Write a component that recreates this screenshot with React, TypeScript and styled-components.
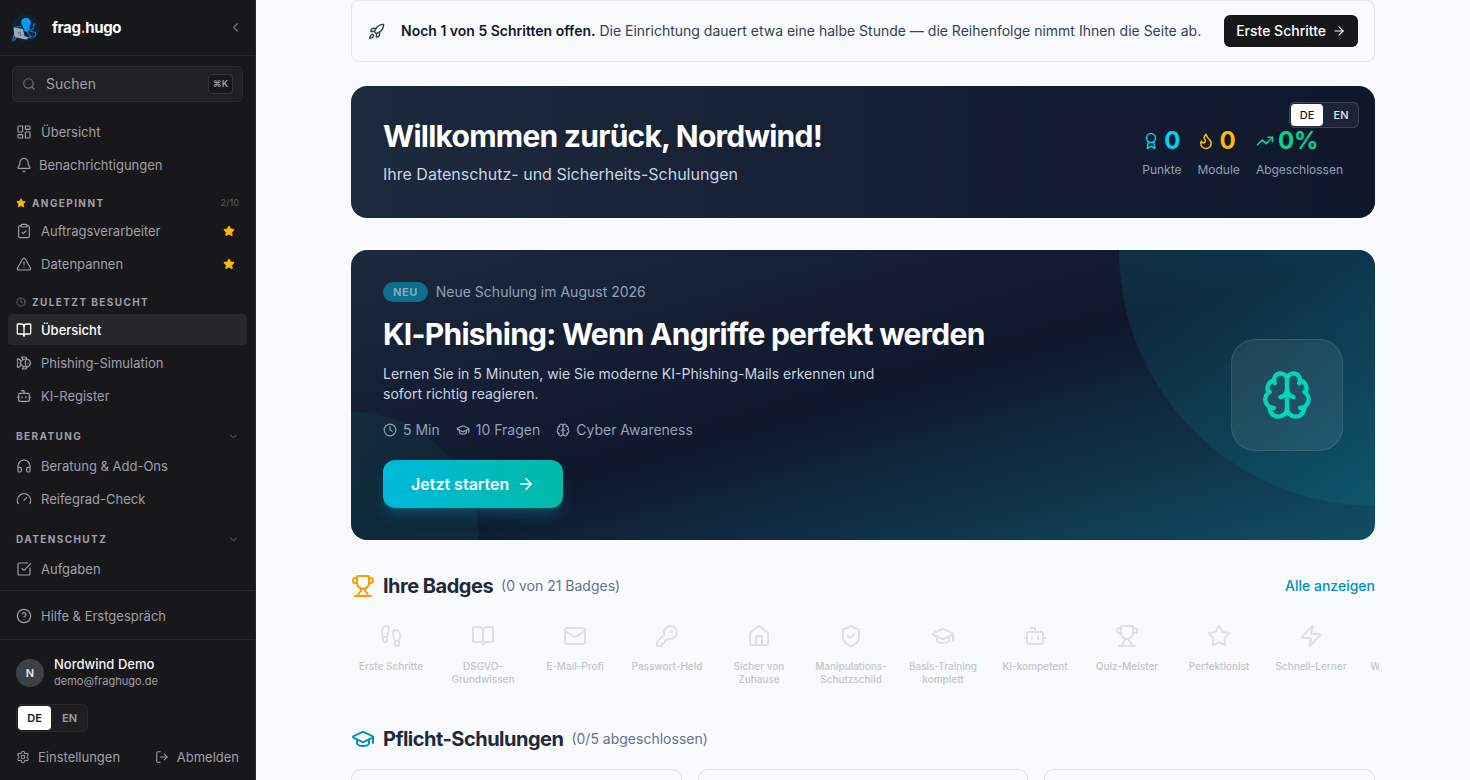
import React from "react";
import styled, { createGlobalStyle, css } from "styled-components";
import {
  ArrowRight,
  Award,
  Bell,
  BookOpen,
  Bot,
  Brain,
  ChevronDown,
  ChevronLeft,
  CircleHelp,
  ClipboardCheck,
  Clock,
  Fish,
  Flame,
  Footprints,
  GraduationCap,
  Headphones,
  House,
  KeyRound,
  LayoutDashboard,
  LogOut,
  LucideIcon,
  Mail,
  Rocket,
  Search,
  Settings,
  ShieldCheck,
  SquareCheckBig,
  Star,
  TrendingUp,
  TriangleAlert,
  Trophy,
  Zap,
} from "lucide-react";

const GlobalStyle = createGlobalStyle`
  *, *::before, *::after { box-sizing: border-box; }
  body {
    margin: 0;
    background: #f8fafc;
    color: #1e293b;
    font-family: Inter, "Liberation Sans", sans-serif;
    font-size: 14px;
    line-height: 20px;
    -webkit-font-smoothing: antialiased;
  }
  button, input { font: inherit; color: inherit; }
  button { cursor: pointer; border: 0; background: none; padding: 0; }
  a { color: inherit; text-decoration: none; }
  h1, h2, p, ul { margin: 0; padding: 0; }
  ul { list-style: none; }
  svg { flex: none; display: block; }
`;

const Shell = styled.div`
  display: flex;
  height: 100vh;
  overflow: hidden;
`;

/* ---------- Sidebar ---------- */

const Sidebar = styled.aside`
  flex: none;
  display: flex;
  flex-direction: column;
  width: 256px;
  background: #18181b;
  border-right: 1px solid #27272a;
  color: #9f9fa9;
`;

const SidebarHeader = styled.header`
  display: flex;
  align-items: center;
  gap: 12px;
  height: 56px;
  flex: none;
  padding: 0 12px;
  border-bottom: 1px solid #27272a;
`;

const Brand = styled.a`
  flex: 1;
  display: flex;
  align-items: center;
  gap: 12px;
  font-size: 15px;
  font-weight: 700;
  letter-spacing: -0.025em;
  color: #fff;
  span { color: #f59e0b; }
`;

const CollapseButton = styled.button`
  color: #71717b;
`;

const SearchBox = styled.label`
  flex: none;
  display: flex;
  align-items: center;
  gap: 10px;
  height: 36px;
  margin: 10px 12px 0;
  padding: 0 9px;
  border: 1px solid #2c2c30;
  border-radius: 6px;
  background: #202023;
  input {
    flex: 1;
    min-width: 0;
    padding: 0;
    border: 0;
    outline: 0;
    background: none;
    &::placeholder { color: #9f9fa9; opacity: 1; }
  }
  svg { color: #71717b; }
`;

const Kbd = styled.kbd`
  padding: 0 4px;
  border: 1px solid #34343a;
  border-radius: 4px;
  background: #18181b;
  font-family: inherit;
  font-size: 9px;
  font-weight: 600;
  line-height: 18px;
`;

const Nav = styled.nav`
  flex: 1;
  min-height: 0;
  overflow-y: auto;
  scrollbar-width: none;
  padding: 14px 8px 0;
`;

const NavList = styled.ul`
  display: flex;
  flex-direction: column;
  gap: 2px;
`;

const NavLink = styled.a<{ $active?: boolean; $gap?: number }>`
  flex: 1;
  display: flex;
  align-items: center;
  gap: ${(p) => p.$gap ?? 9}px;
  height: 31px;
  padding: 0 8px;
  border-radius: 4px;
  font-size: 13px;
  ${(p) =>
    p.$active &&
    css`
      background: #27272a;
      color: #fff;
      font-weight: 500;
    `}
`;

const NavItem = styled.li`
  display: flex;
  position: relative;
`;

const PinButton = styled.button`
  position: absolute;
  right: 12px;
  top: 10px;
  color: #ffb900;
`;

const Group = styled.section<{ $collapsible?: boolean }>`
  display: flex;
  flex-direction: column;
  gap: ${(p) => (p.$collapsible ? 2 : 0)}px;
  margin-top: ${(p) => (p.$collapsible ? 13 : 11)}px;
`;

const groupHead = css`
  display: flex;
  align-items: center;
  gap: 6px;
  height: 24px;
  padding: 0 8px;
  font-size: 10px;
  font-weight: 700;
  letter-spacing: 0.14em;
  text-transform: uppercase;
  color: #9f9fa9;
`;

const GroupTitle = styled.h2`
  ${groupHead}
`;

const GroupToggle = styled.button`
  ${groupHead}
  justify-content: space-between;
  text-align: left;
  svg { color: #71717b; }
`;

const Count = styled.span`
  margin-left: auto;
  font-size: 9px;
  font-weight: 500;
  letter-spacing: 0;
  color: #52525c;
`;

const HelpBar = styled.div`
  flex: none;
  padding: 9px 8px 8px;
  border-top: 1px solid #27272a;
`;

const Account = styled.footer`
  flex: none;
  display: flex;
  flex-direction: column;
  align-items: flex-start;
  padding: 15px 16px 13px;
  border-top: 1px solid #27272a;
`;

const UserRow = styled.div`
  display: flex;
  align-items: center;
  gap: 10px;
  margin-bottom: 14px;
`;

const Avatar = styled.span`
  display: grid;
  place-items: center;
  width: 28px;
  height: 28px;
  border-radius: 50%;
  background: #3f3f46;
  color: #e4e4e7;
  font-size: 11px;
  font-weight: 600;
`;

const UserName = styled.p`
  font-size: 13px;
  line-height: 18px;
  font-weight: 500;
  color: #f4f4f5;
`;

const UserMail = styled.p`
  font-size: 11px;
  line-height: 17px;
`;

const Languages = styled.div<{ $glass?: boolean }>`
  display: flex;
  gap: 2px;
  padding: 1px;
  border: 1px solid ${(p) => (p.$glass ? "rgba(255,255,255,.15)" : "#2a2a2e")};
  border-radius: 6px;
  background: ${(p) => (p.$glass ? "rgba(255,255,255,.06)" : "#1e1e21")};
`;

const Language = styled.button<{ $active?: boolean; $small?: boolean }>`
  height: ${(p) => (p.$small ? 22 : 24)}px;
  width: ${(p) => (p.$small ? 32 : 33)}px;
  border-radius: 4px;
  font-size: 11px;
  font-weight: ${(p) => (p.$small ? 500 : 600)};
  ${(p) =>
    p.$active &&
    css`
      background: #fff;
      color: #18181b;
    `}
`;

const AccountLinks = styled.div`
  align-self: stretch;
  display: flex;
  justify-content: space-between;
  margin-top: 15px;
  font-size: 13px;
`;

const IconLink = styled.a`
  display: flex;
  align-items: center;
  gap: 8px;
`;

/* ---------- Main ---------- */

const Main = styled.main`
  flex: 1;
  min-width: 0;
  overflow-y: auto;
  scrollbar-width: none;
  padding: 0 24px 32px;
`;

const Content = styled.div`
  max-width: 1024px;
  margin: 0 auto;
`;

const SetupBanner = styled.section`
  display: flex;
  align-items: center;
  gap: 16px;
  padding: 14px 16px;
  border: 1px solid #e2e8f0;
  border-radius: 8px;
  color: #334155;
  p { flex: 1; }
  strong { font-weight: 600; color: #0f172b; }
`;

const SetupButton = styled.a`
  display: flex;
  align-items: center;
  gap: 6px;
  height: 32px;
  padding: 0 12px;
  border-radius: 6px;
  background: #18181b;
  color: #fff;
  font-weight: 500;
`;

const Welcome = styled.section`
  position: relative;
  display: flex;
  align-items: center;
  justify-content: space-between;
  margin-top: 24px;
  padding: 32px;
  border-radius: 16px;
  background: linear-gradient(to right, #1d293d, #0f172b);
  color: #fff;
`;

const Title = styled.h1`
  font-size: 30px;
  line-height: 36px;
  font-weight: 700;
  letter-spacing: -0.025em;
  color: #fff;
`;

const WelcomeText = styled.p`
  margin-top: 8px;
  font-size: 16px;
  line-height: 24px;
  color: #cad5e2;
`;

const FloatingLanguages = styled.div`
  position: absolute;
  top: 16px;
  right: 16px;
  color: #e2e8f0;
`;

const Stats = styled.div`
  display: flex;
  gap: 16px;
`;

const StatValue = styled.div<{ $color: string }>`
  display: flex;
  align-items: center;
  gap: 4px;
  font-size: 24px;
  line-height: 32px;
  font-weight: 700;
  color: ${(p) => p.$color};
`;

const StatLabel = styled.p`
  margin-top: 4px;
  font-size: 12px;
  line-height: 18px;
  color: #90a1b9;
`;

const Hero = styled.section`
  position: relative;
  overflow: hidden;
  display: flex;
  align-items: center;
  justify-content: space-between;
  margin-top: 32px;
  padding: 32px;
  border-radius: 16px;
  background: linear-gradient(to bottom right, #1d293d, #0f172b, #104e64);
  &::before, &::after {
    content: "";
    position: absolute;
  }
  &::before {
    top: 0;
    right: 0;
    width: 256px;
    height: 256px;
    border-bottom-left-radius: 100%;
    background: linear-gradient(to bottom left, rgba(0, 184, 219, 0.2), rgba(0, 187, 167, 0.05));
  }
  &::after {
    bottom: 0;
    left: 0;
    width: 128px;
    height: 128px;
    border-top-right-radius: 100%;
    background: linear-gradient(to top right, rgba(0, 187, 167, 0.12), rgba(0, 187, 167, 0.04));
  }
`;

const HeroBody = styled.div`
  position: relative;
  z-index: 1;
`;

const HeroTag = styled.div`
  display: flex;
  align-items: center;
  gap: 8px;
  margin-bottom: 12px;
  color: #90a1b9;
`;

const NewPill = styled.span`
  padding: 0 10px;
  border-radius: 10px;
  background: #0b708f;
  color: #8ba6b5;
  font-size: 11px;
  font-weight: 700;
  letter-spacing: 0.05em;
`;

const HeroTitle = styled(Title).attrs({ as: "h2" })`
  line-height: 40px;
`;

const HeroText = styled.p`
  max-width: 512px;
  margin-top: 10px;
  color: #cad5e2;
`;

const HeroMeta = styled.ul`
  display: flex;
  gap: 16px;
  margin: 16px 0 20px;
  color: #90a1b9;
  li { display: flex; align-items: center; gap: 6px; }
`;

const StartButton = styled.button`
  display: flex;
  align-items: center;
  gap: 8px;
  height: 48px;
  padding: 0 28px;
  border-radius: 12px;
  background: linear-gradient(to right, #00b8db, #00bba7);
  box-shadow: 0 10px 15px -3px rgba(0, 184, 219, 0.25), 0 4px 6px -4px rgba(0, 184, 219, 0.25);
  color: #fff;
  font-size: 16px;
  font-weight: 600;
`;

const HeroTile = styled.div`
  position: relative;
  z-index: 1;
  display: grid;
  place-items: center;
  width: 112px;
  height: 112px;
  border: 1px solid rgba(255, 255, 255, 0.1);
  border-radius: 24px;
  background: rgba(255, 255, 255, 0.08);
  color: #00d5be;
`;

const Section = styled.section`
  margin-top: 32px;
`;

const SectionHead = styled.header<{ $icon: string }>`
  display: flex;
  align-items: center;
  gap: 8px;
  height: 28px;
  > svg { color: ${(p) => p.$icon}; }
  h2 {
    font-size: 20px;
    line-height: 28px;
    font-weight: 700;
    letter-spacing: -0.025em;
  }
  > span { color: #62748e; }
  > a { margin-left: auto; color: #0092b8; font-weight: 500; }
`;

const BadgeStrip = styled.ul`
  display: flex;
  gap: 12px;
  margin: 16px -4px 0;
  padding: 0 4px;
  overflow-x: auto;
  scrollbar-width: none;
`;

const Badge = styled.li`
  flex: none;
  display: flex;
  flex-direction: column;
  align-items: center;
  gap: 12px;
  width: 80px;
  padding: 8px 0 7px;
  color: #c4c7cd;
  font-size: 10px;
  line-height: 13px;
  font-weight: 500;
  text-align: center;
  svg { color: #dbe1ea; }
`;

const CourseGrid = styled.div`
  display: grid;
  grid-template-columns: repeat(3, 1fr);
  gap: 16px;
  margin-top: 16px;
`;

const CourseCard = styled.article`
  height: 200px;
  border: 1px solid #e2e4e9;
  border-radius: 10px;
`;

const Octopus = () => (
  <svg width="28" height="28" viewBox="0 0 28 28" fill="none" aria-hidden="true">
    <circle cx="14" cy="14" r="14" fill="#0e2230" />
    <g stroke="#1673c4" strokeWidth="1.300" strokeLinecap="round">
      <path d="M16.500 14c2 3 5 2 5-1 0-2 .5-3 1.500-3" />
      <path d="M16.500 16c2 3 6 1 7 3s-.5 4-2.500 4" />
      <path d="M15.500 18c1 4 4 3 3.500 6" />
      <path d="M10 23c3 3 7 1.500 9-1" />
      <path d="M9 12.500c-3 1-5-.5-6.500 1" />
      <path d="M3 20c-2 2-2 4-2 7M6 23c-2 0-3 1-3.500 3" />
    </g>
    <path
      d="M14 4c3 0 5 2 5 5 0 2-1.500 3-1.500 5 0 2.500-1 4-3 4s-3-2-3-4c0-2-2.500-3-2.500-5.500C9 6 11 4 14 4z"
      fill="#0b95f5"
    />
    <path d="M1.500 13.500l9.500 1.500 1.500 7 4 1.500-2 2-6-1-6-2z" fill="#a3a8b0" />
    <path d="M6 19l2-1 .5 4" stroke="#3d6489" />
  </svg>
);

type Entry = { icon: LucideIcon; label: string; active?: boolean; pinned?: boolean; gap?: number };

const NavEntries = ({ items }: { items: Entry[] }) => (
  <NavList>
    {items.map(({ icon: Icon, label, active, pinned, gap }) => (
      <NavItem key={label}>
        <NavLink href="#" $active={active} $gap={gap} aria-current={active ? "page" : undefined}>
          <Icon size={16} strokeWidth={active ? 2 : 1.75} />
          {label}
        </NavLink>
        {pinned && (
          <PinButton aria-label={`${label} lösen`}>
            <Star size={12} fill="currentColor" />
          </PinButton>
        )}
      </NavItem>
    ))}
  </NavList>
);

const LanguageSwitch = ({ glass }: { glass?: boolean }) => (
  <Languages $glass={glass} role="group" aria-label="Sprache">
    <Language $active $small={glass} aria-pressed="true">DE</Language>
    <Language $small={glass} aria-pressed="false">EN</Language>
  </Languages>
);

const badges: [LucideIcon, string][] = [
  [Footprints, "Erste Schritte"],
  [BookOpen, "DSGVO-Grundwissen"],
  [Mail, "E-Mail-Profi"],
  [KeyRound, "Passwort-Held"],
  [House, "Sicher von Zuhause"],
  [ShieldCheck, "Manipulations-Schutzschild"],
  [GraduationCap, "Basis-Training komplett"],
  [Bot, "KI-kompetent"],
  [Trophy, "Quiz-Meister"],
  [Star, "Perfektionist"],
  [Zap, "Schnell-Lerner"],
  [Flame, "Wissensdurst"],
];

const stats: [LucideIcon, string, string, string][] = [
  [Award, "0", "Punkte", "#00d3f2"],
  [Flame, "0", "Module", "#ffb900"],
  [TrendingUp, "0%", "Abgeschlossen", "#00d492"],
];

export default function App() {
  return (
    <>
      <GlobalStyle />
      <Shell>
        <Sidebar>
          <SidebarHeader>
            <Brand href="#">
              <Octopus />
              <div>frag<span>.</span>hugo</div>
            </Brand>
            <CollapseButton aria-label="Seitenleiste einklappen">
              <ChevronLeft size={15} />
            </CollapseButton>
          </SidebarHeader>
          <SearchBox>
            <Search size={14} />
            <input type="text" placeholder="Suchen" aria-label="Suchen" />
            <Kbd>⌘K</Kbd>
          </SearchBox>
          <Nav aria-label="Hauptnavigation">
            <NavEntries
              items={[
                { icon: LayoutDashboard, label: "Übersicht" },
                { icon: Bell, label: "Benachrichtigungen", gap: 7 },
              ]}
            />
            <Group>
              <GroupTitle>
                <Star size={10} fill="#ffb900" color="#ffb900" />
                Angepinnt
                <Count>2/10</Count>
              </GroupTitle>
              <NavEntries
                items={[
                  { icon: ClipboardCheck, label: "Auftragsverarbeiter", pinned: true },
                  { icon: TriangleAlert, label: "Datenpannen", pinned: true },
                ]}
              />
            </Group>
            <Group>
              <GroupTitle>
                <Clock size={10} color="#71717b" />
                Zuletzt besucht
              </GroupTitle>
              <NavEntries
                items={[
                  { icon: BookOpen, label: "Übersicht", active: true },
                  { icon: Fish, label: "Phishing-Simulation" },
                  { icon: Bot, label: "KI-Register" },
                ]}
              />
            </Group>
            <Group $collapsible>
              <GroupToggle aria-expanded="true">
                Beratung
                <ChevronDown size={11} />
              </GroupToggle>
              <NavEntries
                items={[
                  { icon: Headphones, label: "Beratung & Add-Ons" },
                  { icon: GaugeArc, label: "Reifegrad-Check" },
                ]}
              />
            </Group>
            <Group $collapsible>
              <GroupToggle aria-expanded="true">
                Datenschutz
                <ChevronDown size={11} />
              </GroupToggle>
              <NavEntries items={[{ icon: SquareCheckBig, label: "Aufgaben" }]} />
            </Group>
          </Nav>
          <HelpBar>
            <NavLink href="#">
              <CircleHelp size={16} strokeWidth={1.75} />
              Hilfe & Erstgespräch
            </NavLink>
          </HelpBar>
          <Account>
            <UserRow>
              <Avatar>N</Avatar>
              <div>
                <UserName>Nordwind Demo</UserName>
                <UserMail>demo@fraghugo.de</UserMail>
              </div>
            </UserRow>
            <LanguageSwitch />
            <AccountLinks>
              <IconLink href="#">
                <Settings size={14} strokeWidth={1.75} />
                Einstellungen
              </IconLink>
              <IconLink href="#">
                <LogOut size={14} strokeWidth={1.75} />
                Abmelden
              </IconLink>
            </AccountLinks>
          </Account>
        </Sidebar>

        <Main>
          <Content>
            <SetupBanner>
              <Rocket size={17} />
              <p>
                <strong>Noch 1 von 5 Schritten offen.</strong> Die Einrichtung dauert etwa eine halbe Stunde — die
                Reihenfolge nimmt Ihnen die Seite ab.
              </p>
              <SetupButton href="#">
                Erste Schritte
                <ArrowRight size={14} />
              </SetupButton>
            </SetupBanner>

            <Welcome>
              <div>
                <Title>Willkommen zurück, Nordwind!</Title>
                <WelcomeText>Ihre Datenschutz- und Sicherheits-Schulungen</WelcomeText>
              </div>
              <Stats>
                {stats.map(([Icon, value, label, color]) => (
                  <div key={label}>
                    <StatValue $color={color}>
                      <Icon size={18} />
                      {value}
                    </StatValue>
                    <StatLabel>{label}</StatLabel>
                  </div>
                ))}
              </Stats>
              <FloatingLanguages>
                <LanguageSwitch glass />
              </FloatingLanguages>
            </Welcome>

            <Hero>
              <HeroBody>
                <HeroTag>
                  <NewPill>NEU</NewPill>
                  Neue Schulung im August 2026
                </HeroTag>
                <HeroTitle>KI-Phishing: Wenn Angriffe perfekt werden</HeroTitle>
                <HeroText>
                  Lernen Sie in 5 Minuten, wie Sie moderne KI-Phishing-Mails erkennen und sofort richtig reagieren.
                </HeroText>
                <HeroMeta>
                  <li><Clock size={14} />5 Min</li>
                  <li><GraduationCap size={14} />10 Fragen</li>
                  <li><Brain size={14} />Cyber Awareness</li>
                </HeroMeta>
                <StartButton>
                  Jetzt starten
                  <ArrowRight size={18} />
                </StartButton>
              </HeroBody>
              <HeroTile>
                <Brain size={52} />
              </HeroTile>
            </Hero>

            <Section>
              <SectionHead $icon="#f99c00">
                <Trophy size={24} />
                <h2>Ihre Badges</h2>
                <span>(0 von 21 Badges)</span>
                <a href="#">Alle anzeigen</a>
              </SectionHead>
              <BadgeStrip>
                {badges.map(([Icon, label]) => (
                  <Badge key={label}>
                    <Icon size={24} />
                    {label}
                  </Badge>
                ))}
              </BadgeStrip>
            </Section>

            <Section>
              <SectionHead $icon="#0092b8">
                <GraduationCap size={24} />
                <h2>Pflicht-Schulungen</h2>
                <span>(0/5 abgeschlossen)</span>
              </SectionHead>
              <CourseGrid>
                <CourseCard />
                <CourseCard />
                <CourseCard />
              </CourseGrid>
            </Section>
          </Content>
        </Main>
      </Shell>
    </>
  );
}

const GaugeArc = (({ size = 24, strokeWidth = 2 }: { size?: number; strokeWidth?: number }) => (
  <svg
    width={size}
    height={size}
    viewBox="0 0 24 24"
    fill="none"
    stroke="currentColor"
    strokeWidth={strokeWidth}
    strokeLinecap="round"
    strokeLinejoin="round"
    aria-hidden="true"
  >
    <path d="m12 14 4-4" />
    <path d="M3.340 19a10 10 0 1 1 17.320 0" />
  </svg>
)) as unknown as LucideIcon;
